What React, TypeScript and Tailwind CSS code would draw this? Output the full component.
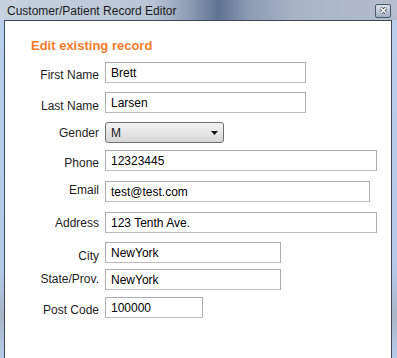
const fields: {
  label: string;
  value: string;
  width: string;
  gap: string;
  labelPad: string;
}[] = [
  { label: "First Name", value: "Brett", width: "w-[201px]", gap: "mt-0", labelPad: "pt-[4px]" },
  { label: "Last Name", value: "Larsen", width: "w-[201px]", gap: "mt-[9px]", labelPad: "pt-[6px]" },
  { label: "Gender", value: "M", width: "w-[119px]", gap: "mt-[9px]", labelPad: "pt-0" },
  { label: "Phone", value: "12323445", width: "w-[272px]", gap: "mt-[7px]", labelPad: "pt-[4px]" },
  { label: "Email", value: "test@test.com", width: "w-[265px]", gap: "mt-[10px]", labelPad: "pb-[4px]" },
  { label: "Address", value: "123 Tenth Ave.", width: "w-[272px]", gap: "mt-[10px]", labelPad: "pt-0" },
  { label: "City", value: "NewYork", width: "w-[176px]", gap: "mt-[9px]", labelPad: "pt-[6px]" },
  { label: "State/Prov.", value: "NewYork", width: "w-[176px]", gap: "mt-[6px]", labelPad: "pb-[2px]" },
  { label: "Post Code", value: "100000", width: "w-[98px]", gap: "mt-[7px]", labelPad: "pt-[4px]" },
];

const TextBox: React.FC<{ value: string; width: string }> = ({ value, width }) => {
  return (
    <div
      className={`${width} h-[21px] border border-[#abadb3] border-b-[#c3b8bd] bg-white flex items-center pl-[5px] text-[12px] text-black`}
    >
      {value}
    </div>
  );
};

const ComboBox: React.FC<{ value: string; width: string }> = ({ value, width }) => {
  return (
    <div
      className={`${width} h-[21px] rounded-[3px] border border-[#707070] bg-gradient-to-b from-[#f3f3f3] via-[#e6e6e6] to-[#d6d6d6] flex items-center justify-between pl-[5px] pr-[5px] text-[12px] text-[#1a1a1a]`}
    >
      <span>{value}</span>
      <svg width="7" height="4" viewBox="0 0 7 4">
        <path d="M0 0 H7 L3.5 4 Z" fill="#111" />
      </svg>
    </div>
  );
};

export default function App() {
  return (
    <div
      className="w-[397px] h-[358px] overflow-hidden flex flex-col bg-[linear-gradient(to_bottom,#b9cfea_0%,#b3cbe9_75%,#a9b6c8_88%,#b6cde9_100%)]"
      style={{ fontFamily: '"Liberation Sans", Arial, sans-serif' }}
    >
      <div className="h-[20px] shrink-0 flex items-center justify-between pl-[7px] pr-[6px] bg-[linear-gradient(to_right,#c6d1df_0%,#bac6d7_38%,#8c9bb3_48%,#5f7393_55%,#8e9db4_63%,#a9b4c6_75%,#b3bdcd_100%)]">
        <span className="text-[12px] text-[#1b1b1b] leading-none pt-[1px]">
          Customer/Patient Record Editor
        </span>
        <div className="w-[16px] h-[14px] mt-[1px] rounded-[2px] border border-[#4c596c] bg-gradient-to-b from-[#d9e0ea] to-[#a3b0c4] flex items-center justify-center">
          <svg width="7" height="7" viewBox="0 0 7 7">
            <path d="M1 1 L6 6 M6 1 L1 6" stroke="#2f3a4a" strokeWidth="3" strokeLinecap="square" />
            <path d="M1 1 L6 6 M6 1 L1 6" stroke="#ffffff" strokeWidth="1.6" strokeLinecap="square" />
          </svg>
        </div>
      </div>
      <div className="flex-1 ml-[4px] mr-[5px] border border-b-0 border-[#3d4757] bg-white">
        <div className="pl-[26px] mt-[17px] h-[16px] flex items-center text-[13px] font-bold text-[#f47b2c]">
          Edit existing record
        </div>
        <div className="mt-[8px] flex flex-col">
          {fields.map((f) => (
            <div key={f.label} className={`flex items-center h-[21px] ${f.gap}`}>
              <div
                className={`w-[94px] text-right text-[12px] leading-[14px] text-[#1e1e1e] ${f.labelPad}`}
              >
                {f.label}
              </div>
              <div className="ml-[6px]">
                {f.label === "Gender" ? (
                  <ComboBox value={f.value} width={f.width} />
                ) : (
                  <TextBox value={f.value} width={f.width} />
                )}
              </div>
            </div>
          ))}
        </div>
      </div>
    </div>
  );
}
